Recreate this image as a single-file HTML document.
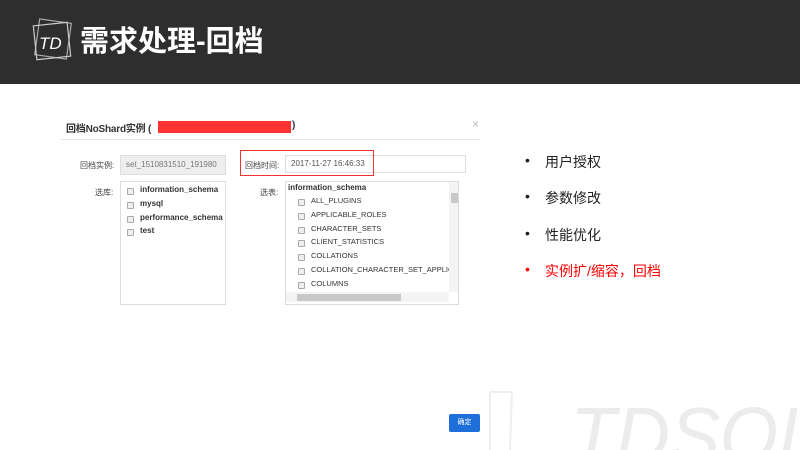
<!DOCTYPE html>
<html><head><meta charset="utf-8"><style>
*{margin:0;padding:0;box-sizing:border-box}
html,body{width:800px;height:450px;overflow:hidden}
body{background:#fff;position:relative;font-family:"Liberation Sans","Noto Sans CJK SC",sans-serif;color:#333}
#w{position:absolute;left:0;top:0;width:800px;height:450px;overflow:hidden}
.a{position:absolute;white-space:nowrap}
.hdr{position:absolute;left:0;top:0;width:800px;height:84px;background:#2e2e2e}
.sm{font-size:8px;color:#444}
.cb{position:absolute;width:7px;height:7px;border:1px solid #aaa;border-radius:1px;background:#eee}
.li{font-size:14px;color:#222}
</style></head><body><div id="w">
<div class="hdr"></div>
<svg class="a" style="left:30px;top:16px" width="45" height="50" viewBox="0 0 45 50">
<rect x="7" y="5" width="32" height="36" fill="none" stroke="#aaa" stroke-width="1.2" transform="rotate(8 23 23)"/>
<rect x="5" y="8" width="34" height="34" fill="none" stroke="#ccc" stroke-width="1.2" transform="rotate(-6 22 25)"/>
<text x="9" y="33" font-size="17" font-style="italic" fill="#fff" font-family="Liberation Sans">TD</text>
</svg>
<div class="a" style="left:80px;top:22px;font-size:29px;font-weight:bold;color:#fff;line-height:40px">需求处理-回档</div>

<div class="a" style="left:66px;top:120px;font-size:10px;color:#333;font-weight:bold;letter-spacing:-0.2px">回档NoShard实例 (</div>
<div class="a" style="left:158px;top:121px;width:133px;height:12px;background:#f33"></div>
<div class="a" style="left:292px;top:120px;font-size:10px;font-weight:bold">)</div>
<div class="a" style="left:472px;top:117px;font-size:12px;color:#bbb">×</div>
<div class="a" style="left:60px;top:139px;width:420px;height:1px;background:#e8e8e8"></div>

<div class="a sm" style="left:80px;top:160px">回档实例:</div>
<div class="a" style="left:120px;top:155px;width:106px;height:20px;background:#eee;border:1px solid #ddd"></div>
<div class="a" style="left:126px;top:160px;font-size:8px;color:#777">set_1510831510_191980</div>
<div class="a" style="left:285px;top:155px;width:181px;height:18px;border:1px solid #ddd"></div>
<div class="a" style="left:240px;top:150px;width:134px;height:26px;border:1.5px solid #e33"></div>
<div class="a sm" style="left:245px;top:160px">回档时间:</div>
<div class="a" style="left:291px;top:159px;font-size:8px;color:#555">2017-11-27 16:46:33</div>

<div class="a sm" style="left:95px;top:187px">选库:</div>
<div class="a" style="left:120px;top:181px;width:106px;height:124px;border:1px solid #ddd"></div>
<div class="cb" style="left:127px;top:188px"></div><div class="a" style="left:140px;top:185px;font-size:8px;font-weight:bold">information_schema</div>
<div class="cb" style="left:127px;top:202px"></div><div class="a" style="left:140px;top:199px;font-size:8px;font-weight:bold">mysql</div>
<div class="cb" style="left:127px;top:216px"></div><div class="a" style="left:140px;top:213px;font-size:8px;font-weight:bold">performance_schema</div>
<div class="cb" style="left:127px;top:229px"></div><div class="a" style="left:140px;top:226px;font-size:8px;font-weight:bold">test</div>

<div class="a sm" style="left:260px;top:187px">选表:</div>
<div class="a" style="left:285px;top:181px;width:174px;height:124px;border:1px solid #ddd;overflow:hidden">
<div class="a" style="left:2px;top:1px;font-size:8px;font-weight:bold">information_schema</div>
<div class="cb" style="left:12px;top:17px"></div><div class="a" style="left:25px;top:14px;font-size:7.5px">ALL_PLUGINS</div>
<div class="cb" style="left:12px;top:31px"></div><div class="a" style="left:25px;top:28px;font-size:7.5px">APPLICABLE_ROLES</div>
<div class="cb" style="left:12px;top:45px"></div><div class="a" style="left:25px;top:42px;font-size:7.5px">CHARACTER_SETS</div>
<div class="cb" style="left:12px;top:58px"></div><div class="a" style="left:25px;top:55px;font-size:7.5px">CLIENT_STATISTICS</div>
<div class="cb" style="left:12px;top:72px"></div><div class="a" style="left:25px;top:69px;font-size:7.5px">COLLATIONS</div>
<div class="cb" style="left:12px;top:86px"></div><div class="a" style="left:25px;top:83px;font-size:7.5px">COLLATION_CHARACTER_SET_APPLICAB</div>
<div class="cb" style="left:12px;top:100px"></div><div class="a" style="left:25px;top:97px;font-size:7.5px">COLUMNS</div>
<div class="a" style="left:163px;top:0;width:10px;height:110px;background:#f4f4f4"></div>
<div class="a" style="left:165px;top:11px;width:7px;height:10px;background:#c8c8c8"></div>
<div class="a" style="left:0;top:110px;width:163px;height:10px;background:#f4f4f4"></div>
<div class="a" style="left:11px;top:112px;width:104px;height:7px;background:#c8c8c8"></div>
</div>

<div class="a li" style="left:525px;top:152px">•</div><div class="a li" style="left:545px;top:152px">用户授权</div>
<div class="a li" style="left:525px;top:188px">•</div><div class="a li" style="left:545px;top:188px">参数修改</div>
<div class="a li" style="left:525px;top:225px">•</div><div class="a li" style="left:545px;top:225px">性能优化</div>
<div class="a li" style="left:525px;top:261px;color:#f00">•</div><div class="a li" style="left:545px;top:261px;color:#f00">实例扩/缩容，回档</div>

<svg class="a" style="left:480px;top:390px" width="40" height="60"><path d="M10 2 L10 60 M10 2 L32 2 L30 60" fill="none" stroke="#eee" stroke-width="2"/></svg>
<svg class="a" style="left:560px;top:395px" width="240" height="55"><text x="10" y="68" font-size="80" font-style="italic" fill="#ececec" font-family="Liberation Sans" textLength="250" lengthAdjust="spacingAndGlyphs">TDSQL</text></svg>
<div class="a" style="left:449px;top:414px;width:31px;height:18px;background:#1e6fd9;border-radius:2px;color:#fff;font-size:7px;text-align:center;line-height:18px">确定</div>
</div></body></html>
